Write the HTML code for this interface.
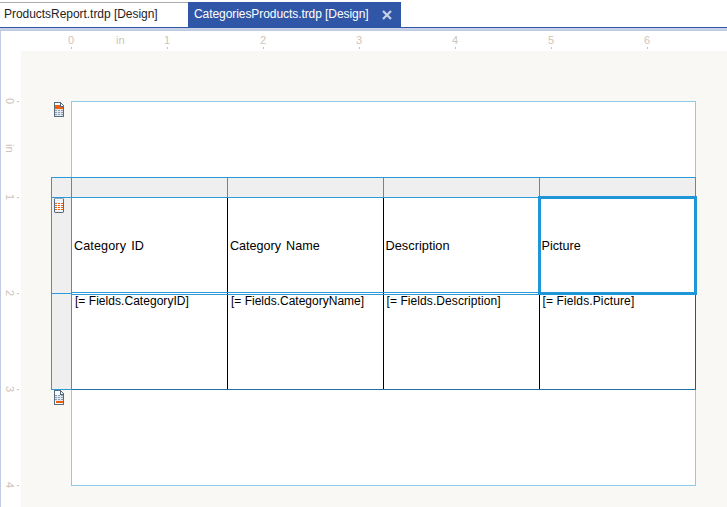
<!DOCTYPE html>
<html><head><meta charset="utf-8">
<style>
html,body{margin:0;padding:0;}
body{width:727px;height:507px;position:relative;overflow:hidden;background:#fff;font-family:"Liberation Sans",sans-serif;}
.a{position:absolute;}
.r{position:absolute;background:#000;}
.t{position:absolute;white-space:nowrap;line-height:1;}
.rh{position:absolute;font-size:11px;color:#cdc5b8;line-height:1;white-space:nowrap;}
.tk{position:absolute;width:1px;height:2px;background:#c6c0b6;}
.vr{position:absolute;font-size:11px;color:#cdc5b8;line-height:1;white-space:nowrap;transform-origin:0 0;transform:rotate(90deg);}
.vtk{position:absolute;width:2px;height:1px;background:#c6c0b6;}
.hd{font-size:12.6px;color:#000;word-spacing:1.5px;}
.fd{font-size:12px;color:#000;}
</style></head><body>
<!-- tab strip -->
<div class="r" style="left:0;top:2px;width:188px;height:1px;background:#ababab"></div>
<div class="t" style="left:4px;top:8px;font-size:12px;letter-spacing:-0.04px;color:#1e1e1e">ProductsReport.trdp [Design]</div>
<div class="r" style="left:188px;top:2px;width:213px;height:25px;background:#3057a7"></div>
<div class="t" style="left:194px;top:8px;font-size:12px;letter-spacing:-0.07px;color:#fff">CategoriesProducts.trdp [Design]</div>
<svg class="a" style="left:381px;top:9px" width="12" height="12" viewBox="0 0 12 12"><path d="M2 2L10 10M10 2L2 10" stroke="#c9d2e6" stroke-width="2.2"/></svg>
<div class="r" style="left:0;top:27px;width:727px;height:1px;background:#3057a7"></div>
<div class="r" style="left:0;top:28px;width:727px;height:1px;background:#cad3e6"></div><div class="r" style="left:0;top:29px;width:727px;height:1px;background:#c4cee5"></div><div class="r" style="left:0;top:30px;width:727px;height:1px;background:#bfcae3"></div>
<div class="r" style="left:0;top:31px;width:1px;height:476px;background:#c0cbe5"></div>

<!-- canvas -->
<div class="r" style="left:21px;top:51px;width:706px;height:456px;background:#f9f8f5"></div>

<!-- horizontal ruler -->
<div class="rh" style="left:68px;top:35px">0</div><div class="tk" style="left:71px;top:47px"></div>
<div class="rh" style="left:116px;top:35px">in</div>
<div class="rh" style="left:164px;top:35px">1</div><div class="tk" style="left:167px;top:47px"></div>
<div class="rh" style="left:260px;top:35px">2</div><div class="tk" style="left:263px;top:47px"></div>
<div class="rh" style="left:356px;top:35px">3</div><div class="tk" style="left:359px;top:47px"></div>
<div class="rh" style="left:452px;top:35px">4</div><div class="tk" style="left:455px;top:47px"></div>
<div class="rh" style="left:548px;top:35px">5</div><div class="tk" style="left:551px;top:47px"></div>
<div class="rh" style="left:644px;top:35px">6</div><div class="tk" style="left:647px;top:47px"></div>

<!-- vertical ruler -->
<div class="vr" style="left:15px;top:98px">0</div><div class="vtk" style="left:17px;top:101px"></div>
<div class="vr" style="left:15px;top:144px">in</div>
<div class="vr" style="left:15px;top:194px">1</div><div class="vtk" style="left:17px;top:197px"></div>
<div class="vr" style="left:15px;top:290px">2</div><div class="vtk" style="left:17px;top:293px"></div>
<div class="vr" style="left:15px;top:386px">3</div><div class="vtk" style="left:17px;top:389px"></div>
<div class="vr" style="left:15px;top:482px">4</div><div class="vtk" style="left:17px;top:485px"></div>

<!-- page -->
<div class="a" style="left:71px;top:101px;width:623px;height:383px;border:1px solid #8dcbec;background:#fff"></div>

<!-- table -->
<div class="r" style="left:52px;top:178px;width:19px;height:211px;background:#efefef"></div>
<div class="r" style="left:72px;top:178px;width:623px;height:19px;background:#efefef"></div>
<!-- black cell borders -->
<div class="r" style="left:227px;top:198px;width:1px;height:191px;background:#000"></div>
<div class="r" style="left:383px;top:198px;width:1px;height:191px;background:#000"></div>
<div class="r" style="left:539px;top:198px;width:1px;height:191px;background:#000"></div>
<div class="r" style="left:695px;top:198px;width:1px;height:191px;background:#1d5c84"></div>
<!-- blue grid -->
<div class="r" style="left:51px;top:177px;width:645px;height:1px;background:#2a9ad8"></div>
<div class="r" style="left:51px;top:197px;width:645px;height:1px;background:#2a9ad8"></div>
<div class="r" style="left:51px;top:177px;width:1px;height:213px;background:#2a9ad8"></div>
<div class="r" style="left:71px;top:177px;width:1px;height:213px;background:#2a9ad8"></div>
<div class="r" style="left:227px;top:177px;width:1px;height:21px;background:#2a9ad8"></div>
<div class="r" style="left:383px;top:177px;width:1px;height:21px;background:#2a9ad8"></div>
<div class="r" style="left:539px;top:177px;width:1px;height:21px;background:#2a9ad8"></div>
<div class="r" style="left:695px;top:177px;width:1px;height:21px;background:#2a9ad8"></div>
<div class="r" style="left:51px;top:293px;width:20px;height:1px;background:#2a9ad8"></div>
<div class="r" style="left:72px;top:292px;width:623px;height:1px;background:#2a9ad8"></div>
<div class="r" style="left:72px;top:294px;width:623px;height:1px;background:#2a9ad8"></div>
<div class="r" style="left:51px;top:389px;width:21px;height:1px;background:#2a9ad8"></div>
<div class="r" style="left:72px;top:389px;width:624px;height:1px;background:#1f72a2"></div>
<!-- selection -->
<div class="a" style="left:538px;top:196px;width:153px;height:93px;border:3px solid #1e96d8"></div>

<!-- texts -->
<div class="t hd" style="left:74px;top:240px;letter-spacing:0.12px">Category ID</div>
<div class="t hd" style="left:230px;top:240px">Category Name</div>
<div class="t hd" style="left:385.5px;top:240px;font-size:12.8px">Description</div>
<div class="t hd" style="left:541.5px;top:240px">Picture</div>
<div class="t fd" style="left:75px;top:295px;letter-spacing:0.04px">[= Fields.CategoryID]</div>
<div class="t fd" style="left:231px;top:295px">[= Fields.CategoryName]</div>
<div class="t fd" style="left:386.5px;top:295px;letter-spacing:0.08px">[= Fields.Description]</div>
<div class="t fd" style="left:542.5px;top:295px;letter-spacing:0.12px">[= Fields.Picture]</div>

<!-- icons -->
<svg class="a" style="left:54px;top:102px" width="10" height="15" viewBox="0 0 10 15" shape-rendering="crispEdges"><rect x="0" y="0" width="7" height="1" fill="#566c80"/><rect x="0" y="1" width="1" height="1" fill="#566c80"/><rect x="1" y="1" width="5" height="1" fill="#fbfcfd"/><rect x="6" y="1" width="2" height="1" fill="#566c80"/><rect x="0" y="2" width="1" height="1" fill="#566c80"/><rect x="1" y="2" width="5" height="1" fill="#fbfcfd"/><rect x="6" y="2" width="1" height="1" fill="#566c80"/><rect x="7" y="2" width="1" height="1" fill="#f4f7f9"/><rect x="8" y="2" width="1" height="1" fill="#566c80"/><rect x="0" y="3" width="1" height="1" fill="#566c80"/><rect x="1" y="3" width="5" height="1" fill="#ec5e10"/><rect x="6" y="3" width="1" height="1" fill="#566c80"/><rect x="7" y="3" width="2" height="1" fill="#f4f7f9"/><rect x="9" y="3" width="1" height="1" fill="#566c80"/><rect x="0" y="4" width="1" height="1" fill="#566c80"/><rect x="1" y="4" width="5" height="1" fill="#ec5e10"/><rect x="6" y="4" width="4" height="1" fill="#566c80"/><rect x="0" y="5" width="1" height="1" fill="#566c80"/><rect x="1" y="5" width="8" height="1" fill="#ec5e10"/><rect x="9" y="5" width="1" height="1" fill="#566c80"/><rect x="0" y="6" width="1" height="1" fill="#566c80"/><rect x="1" y="6" width="8" height="1" fill="#ec5e10"/><rect x="9" y="6" width="1" height="1" fill="#566c80"/><rect x="0" y="7" width="1" height="1" fill="#566c80"/><rect x="1" y="7" width="8" height="1" fill="#e2e8ee"/><rect x="9" y="7" width="1" height="1" fill="#566c80"/><rect x="0" y="8" width="1" height="1" fill="#566c80"/><rect x="1" y="8" width="2" height="1" fill="#8e9eae"/><rect x="3" y="8" width="1" height="1" fill="#e2e8ee"/><rect x="4" y="8" width="2" height="1" fill="#8e9eae"/><rect x="6" y="8" width="1" height="1" fill="#e2e8ee"/><rect x="7" y="8" width="2" height="1" fill="#8e9eae"/><rect x="9" y="8" width="1" height="1" fill="#566c80"/><rect x="0" y="9" width="1" height="1" fill="#566c80"/><rect x="1" y="9" width="8" height="1" fill="#e2e8ee"/><rect x="9" y="9" width="1" height="1" fill="#566c80"/><rect x="0" y="10" width="1" height="1" fill="#566c80"/><rect x="1" y="10" width="2" height="1" fill="#8e9eae"/><rect x="3" y="10" width="1" height="1" fill="#e2e8ee"/><rect x="4" y="10" width="2" height="1" fill="#8e9eae"/><rect x="6" y="10" width="1" height="1" fill="#e2e8ee"/><rect x="7" y="10" width="2" height="1" fill="#8e9eae"/><rect x="9" y="10" width="1" height="1" fill="#566c80"/><rect x="0" y="11" width="1" height="1" fill="#566c80"/><rect x="1" y="11" width="8" height="1" fill="#e2e8ee"/><rect x="9" y="11" width="1" height="1" fill="#566c80"/><rect x="0" y="12" width="1" height="1" fill="#566c80"/><rect x="1" y="12" width="2" height="1" fill="#8e9eae"/><rect x="3" y="12" width="1" height="1" fill="#e2e8ee"/><rect x="4" y="12" width="2" height="1" fill="#8e9eae"/><rect x="6" y="12" width="1" height="1" fill="#e2e8ee"/><rect x="7" y="12" width="2" height="1" fill="#8e9eae"/><rect x="9" y="12" width="1" height="1" fill="#566c80"/><rect x="0" y="13" width="1" height="1" fill="#566c80"/><rect x="1" y="13" width="8" height="1" fill="#e2e8ee"/><rect x="9" y="13" width="1" height="1" fill="#566c80"/><rect x="0" y="14" width="10" height="1" fill="#566c80"/></svg>
<svg class="a" style="left:54px;top:198px" width="10" height="15" viewBox="0 0 10 15" shape-rendering="crispEdges"><rect x="0" y="0" width="1" height="1" fill="#b4bec6"/><rect x="1" y="0" width="8" height="1" fill="#9aa8b4"/><rect x="9" y="0" width="1" height="1" fill="#b4bec6"/><rect x="0" y="1" width="1" height="1" fill="#5b6d7c"/><rect x="1" y="1" width="8" height="1" fill="#fbfcfd"/><rect x="9" y="1" width="1" height="1" fill="#5b6d7c"/><rect x="0" y="2" width="1" height="1" fill="#5b6d7c"/><rect x="1" y="2" width="8" height="1" fill="#e9eef2"/><rect x="9" y="2" width="1" height="1" fill="#5b6d7c"/><rect x="0" y="3" width="1" height="1" fill="#5b6d7c"/><rect x="1" y="3" width="8" height="1" fill="#fbfcfd"/><rect x="9" y="3" width="1" height="1" fill="#5b6d7c"/><rect x="0" y="4" width="1" height="1" fill="#5b6d7c"/><rect x="1" y="4" width="8" height="1" fill="#e9eef2"/><rect x="9" y="4" width="1" height="1" fill="#5b6d7c"/><rect x="0" y="5" width="1" height="1" fill="#5b6d7c"/><rect x="1" y="5" width="2" height="1" fill="#ec5e10"/><rect x="3" y="5" width="1" height="1" fill="#fbfcfd"/><rect x="4" y="5" width="2" height="1" fill="#ec5e10"/><rect x="6" y="5" width="1" height="1" fill="#fbfcfd"/><rect x="7" y="5" width="2" height="1" fill="#ec5e10"/><rect x="9" y="5" width="1" height="1" fill="#5b6d7c"/><rect x="0" y="6" width="1" height="1" fill="#5b6d7c"/><rect x="1" y="6" width="8" height="1" fill="#fbfcfd"/><rect x="9" y="6" width="1" height="1" fill="#5b6d7c"/><rect x="0" y="7" width="1" height="1" fill="#5b6d7c"/><rect x="1" y="7" width="2" height="1" fill="#ec5e10"/><rect x="3" y="7" width="1" height="1" fill="#fbfcfd"/><rect x="4" y="7" width="2" height="1" fill="#ec5e10"/><rect x="6" y="7" width="1" height="1" fill="#fbfcfd"/><rect x="7" y="7" width="2" height="1" fill="#ec5e10"/><rect x="9" y="7" width="1" height="1" fill="#5b6d7c"/><rect x="0" y="8" width="1" height="1" fill="#5b6d7c"/><rect x="1" y="8" width="8" height="1" fill="#fbfcfd"/><rect x="9" y="8" width="1" height="1" fill="#5b6d7c"/><rect x="0" y="9" width="1" height="1" fill="#5b6d7c"/><rect x="1" y="9" width="2" height="1" fill="#ec5e10"/><rect x="3" y="9" width="1" height="1" fill="#fbfcfd"/><rect x="4" y="9" width="2" height="1" fill="#ec5e10"/><rect x="6" y="9" width="1" height="1" fill="#fbfcfd"/><rect x="7" y="9" width="2" height="1" fill="#ec5e10"/><rect x="9" y="9" width="1" height="1" fill="#5b6d7c"/><rect x="0" y="10" width="1" height="1" fill="#5b6d7c"/><rect x="1" y="10" width="8" height="1" fill="#fbfcfd"/><rect x="9" y="10" width="1" height="1" fill="#5b6d7c"/><rect x="0" y="11" width="1" height="1" fill="#5b6d7c"/><rect x="1" y="11" width="2" height="1" fill="#ec5e10"/><rect x="3" y="11" width="1" height="1" fill="#fbfcfd"/><rect x="4" y="11" width="2" height="1" fill="#ec5e10"/><rect x="6" y="11" width="1" height="1" fill="#fbfcfd"/><rect x="7" y="11" width="2" height="1" fill="#ec5e10"/><rect x="9" y="11" width="1" height="1" fill="#5b6d7c"/><rect x="0" y="12" width="1" height="1" fill="#5b6d7c"/><rect x="1" y="12" width="8" height="1" fill="#fbfcfd"/><rect x="9" y="12" width="1" height="1" fill="#5b6d7c"/><rect x="0" y="13" width="1" height="1" fill="#5b6d7c"/><rect x="1" y="13" width="8" height="1" fill="#e9eef2"/><rect x="9" y="13" width="1" height="1" fill="#5b6d7c"/><rect x="0" y="14" width="1" height="1" fill="#b4bec6"/><rect x="1" y="14" width="8" height="1" fill="#5b6d7c"/><rect x="9" y="14" width="1" height="1" fill="#b4bec6"/></svg>
<svg class="a" style="left:54px;top:390px" width="10" height="15" viewBox="0 0 10 15" shape-rendering="crispEdges"><rect x="0" y="0" width="7" height="1" fill="#566c80"/><rect x="0" y="1" width="1" height="1" fill="#566c80"/><rect x="1" y="1" width="5" height="1" fill="#fbfcfd"/><rect x="6" y="1" width="2" height="1" fill="#566c80"/><rect x="0" y="2" width="1" height="1" fill="#566c80"/><rect x="1" y="2" width="5" height="1" fill="#fbfcfd"/><rect x="6" y="2" width="1" height="1" fill="#566c80"/><rect x="7" y="2" width="1" height="1" fill="#f4f7f9"/><rect x="8" y="2" width="1" height="1" fill="#566c80"/><rect x="0" y="3" width="1" height="1" fill="#566c80"/><rect x="1" y="3" width="5" height="1" fill="#fbfcfd"/><rect x="6" y="3" width="1" height="1" fill="#566c80"/><rect x="7" y="3" width="2" height="1" fill="#f4f7f9"/><rect x="9" y="3" width="1" height="1" fill="#566c80"/><rect x="0" y="4" width="1" height="1" fill="#566c80"/><rect x="1" y="4" width="5" height="1" fill="#fbfcfd"/><rect x="6" y="4" width="4" height="1" fill="#566c80"/><rect x="0" y="5" width="1" height="1" fill="#566c80"/><rect x="1" y="5" width="2" height="1" fill="#8e9eae"/><rect x="3" y="5" width="1" height="1" fill="#e2e8ee"/><rect x="4" y="5" width="2" height="1" fill="#8e9eae"/><rect x="6" y="5" width="1" height="1" fill="#e2e8ee"/><rect x="7" y="5" width="2" height="1" fill="#8e9eae"/><rect x="9" y="5" width="1" height="1" fill="#566c80"/><rect x="0" y="6" width="1" height="1" fill="#566c80"/><rect x="1" y="6" width="8" height="1" fill="#e2e8ee"/><rect x="9" y="6" width="1" height="1" fill="#566c80"/><rect x="0" y="7" width="1" height="1" fill="#566c80"/><rect x="1" y="7" width="2" height="1" fill="#8e9eae"/><rect x="3" y="7" width="1" height="1" fill="#e2e8ee"/><rect x="4" y="7" width="2" height="1" fill="#8e9eae"/><rect x="6" y="7" width="1" height="1" fill="#e2e8ee"/><rect x="7" y="7" width="2" height="1" fill="#8e9eae"/><rect x="9" y="7" width="1" height="1" fill="#566c80"/><rect x="0" y="8" width="1" height="1" fill="#566c80"/><rect x="1" y="8" width="8" height="1" fill="#e2e8ee"/><rect x="9" y="8" width="1" height="1" fill="#566c80"/><rect x="0" y="9" width="1" height="1" fill="#566c80"/><rect x="1" y="9" width="2" height="1" fill="#8e9eae"/><rect x="3" y="9" width="1" height="1" fill="#e2e8ee"/><rect x="4" y="9" width="2" height="1" fill="#8e9eae"/><rect x="6" y="9" width="1" height="1" fill="#e2e8ee"/><rect x="7" y="9" width="2" height="1" fill="#8e9eae"/><rect x="9" y="9" width="1" height="1" fill="#566c80"/><rect x="0" y="10" width="1" height="1" fill="#566c80"/><rect x="1" y="10" width="8" height="1" fill="#e2e8ee"/><rect x="9" y="10" width="1" height="1" fill="#566c80"/><rect x="0" y="11" width="1" height="1" fill="#566c80"/><rect x="1" y="11" width="1" height="1" fill="#fbfcfd"/><rect x="2" y="11" width="7" height="1" fill="#ec5e10"/><rect x="9" y="11" width="1" height="1" fill="#566c80"/><rect x="0" y="12" width="1" height="1" fill="#566c80"/><rect x="1" y="12" width="1" height="1" fill="#fbfcfd"/><rect x="2" y="12" width="7" height="1" fill="#ec5e10"/><rect x="9" y="12" width="1" height="1" fill="#566c80"/><rect x="0" y="13" width="1" height="1" fill="#566c80"/><rect x="1" y="13" width="8" height="1" fill="#fbfcfd"/><rect x="9" y="13" width="1" height="1" fill="#566c80"/><rect x="0" y="14" width="10" height="1" fill="#566c80"/></svg>
</body></html>
